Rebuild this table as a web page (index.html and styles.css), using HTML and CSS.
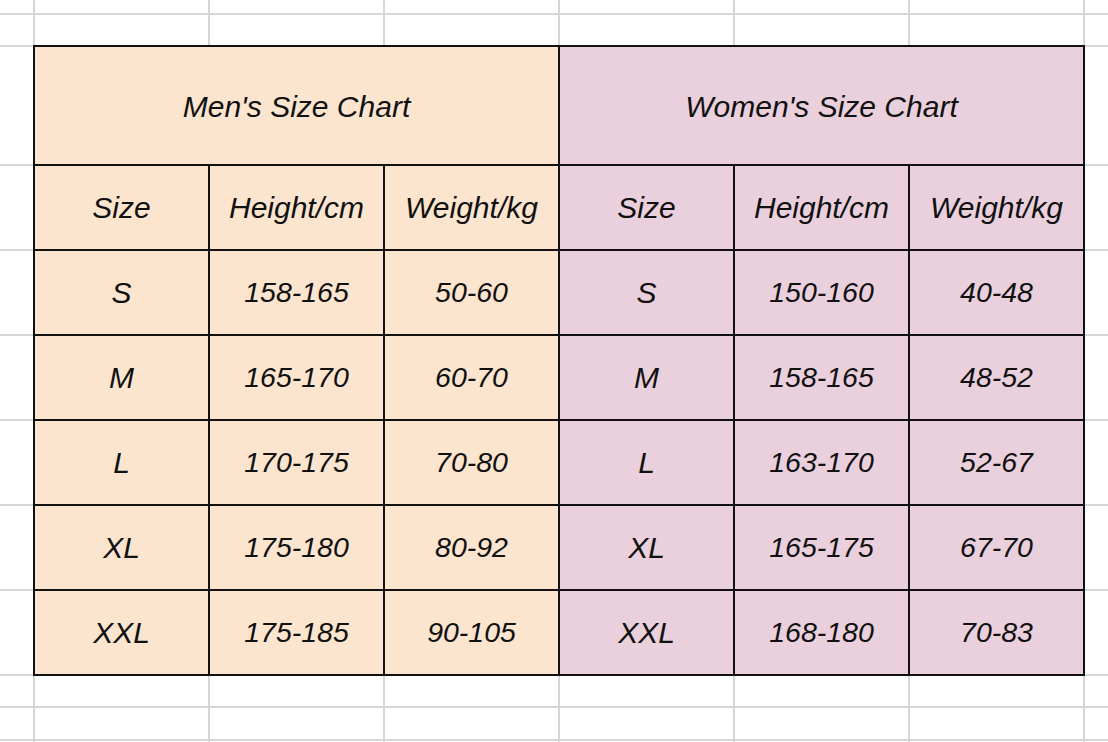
FILE: index.html
```html
<!DOCTYPE html>
<html lang="en">
<head>
<meta charset="utf-8">
<title>Size Chart</title>
<link rel="stylesheet" href="styles.css">
</head>
<body>
<div class="sheet">
  <div class="chart">
    <div class="cell men title">Men's Size Chart</div>
    <div class="cell women title">Women's Size Chart</div>

    <div class="cell men">Size</div>
    <div class="cell men">Height/cm</div>
    <div class="cell men">Weight/kg</div>
    <div class="cell women">Size</div>
    <div class="cell women">Height/cm</div>
    <div class="cell women">Weight/kg</div>

    <div class="cell men">S</div>
    <div class="cell men num">158-165</div>
    <div class="cell men num">50-60</div>
    <div class="cell women">S</div>
    <div class="cell women num">150-160</div>
    <div class="cell women num">40-48</div>

    <div class="cell men">M</div>
    <div class="cell men num">165-170</div>
    <div class="cell men num">60-70</div>
    <div class="cell women">M</div>
    <div class="cell women num">158-165</div>
    <div class="cell women num">48-52</div>

    <div class="cell men">L</div>
    <div class="cell men num">170-175</div>
    <div class="cell men num">70-80</div>
    <div class="cell women">L</div>
    <div class="cell women num">163-170</div>
    <div class="cell women num">52-67</div>

    <div class="cell men">XL</div>
    <div class="cell men num">175-180</div>
    <div class="cell men num">80-92</div>
    <div class="cell women">XL</div>
    <div class="cell women num">165-175</div>
    <div class="cell women num">67-70</div>

    <div class="cell men">XXL</div>
    <div class="cell men num">175-185</div>
    <div class="cell men num">90-105</div>
    <div class="cell women">XXL</div>
    <div class="cell women num">168-180</div>
    <div class="cell women num">70-83</div>
  </div>

  <div class="e"></div><div class="e"></div><div class="e"></div><div class="e"></div>
  <div class="e"></div><div class="e"></div><div class="e"></div><div class="e"></div>
  <div class="e"></div><div class="e"></div><div class="e"></div><div class="e"></div>
  <div class="e"></div><div class="e"></div><div class="e"></div><div class="e"></div>
  <div class="e"></div><div class="e"></div><div class="e"></div><div class="e"></div>
  <div class="e"></div><div class="e"></div><div class="e"></div><div class="e"></div>
  <div class="e"></div><div class="e"></div><div class="e"></div><div class="e"></div>
  <div class="e"></div><div class="e"></div><div class="e"></div><div class="e"></div>
  <div class="e"></div><div class="e"></div><div class="e"></div><div class="e"></div>
  <div class="e"></div><div class="e"></div><div class="e"></div><div class="e"></div>
  <div class="e"></div><div class="e"></div><div class="e"></div><div class="e"></div>
  <div class="e"></div><div class="e"></div><div class="e"></div><div class="e"></div>
  <div class="e"></div><div class="e"></div><div class="e"></div><div class="e"></div>
  <div class="e"></div><div class="e"></div>
</div>
</body>
</html>
```

FILE: styles.css
```css
html, body {
  margin: 0;
  padding: 0;
  background: #ffffff;
}

body {
  width: 1108px;
  height: 742px;
  overflow: hidden;
  font-family: "Liberation Sans", Arial, sans-serif;
}

.sheet {
  display: grid;
  width: 1108px;
  height: 742px;
  grid-template-columns: 33px repeat(6, 173px) 1fr;
  grid-template-rows: 13px 30px 117px repeat(6, 83px) 30px 31px 1fr;
  gap: 2px;
  background: #d6d6d6;
}

.e {
  background: #ffffff;
}

.chart {
  grid-column: 2 / 8;
  grid-row: 3 / 10;
  display: grid;
  grid-template-columns: repeat(6, 173px);
  grid-template-rows: 117px repeat(6, 83px);
  gap: 2px;
  background: #111111;
  outline: 2px solid #111111;
}

.cell {
  display: flex;
  align-items: center;
  justify-content: center;
  font-style: italic;
  font-size: 30px;
  color: #111111;
  white-space: nowrap;
}

.cell.num {
  font-size: 28.5px;
}

.cell.title {
  grid-column: span 3;
  padding-top: 2px;
}

.men {
  background: #fbe5cf;
}

.women {
  background: #ead0dc;
}
```
